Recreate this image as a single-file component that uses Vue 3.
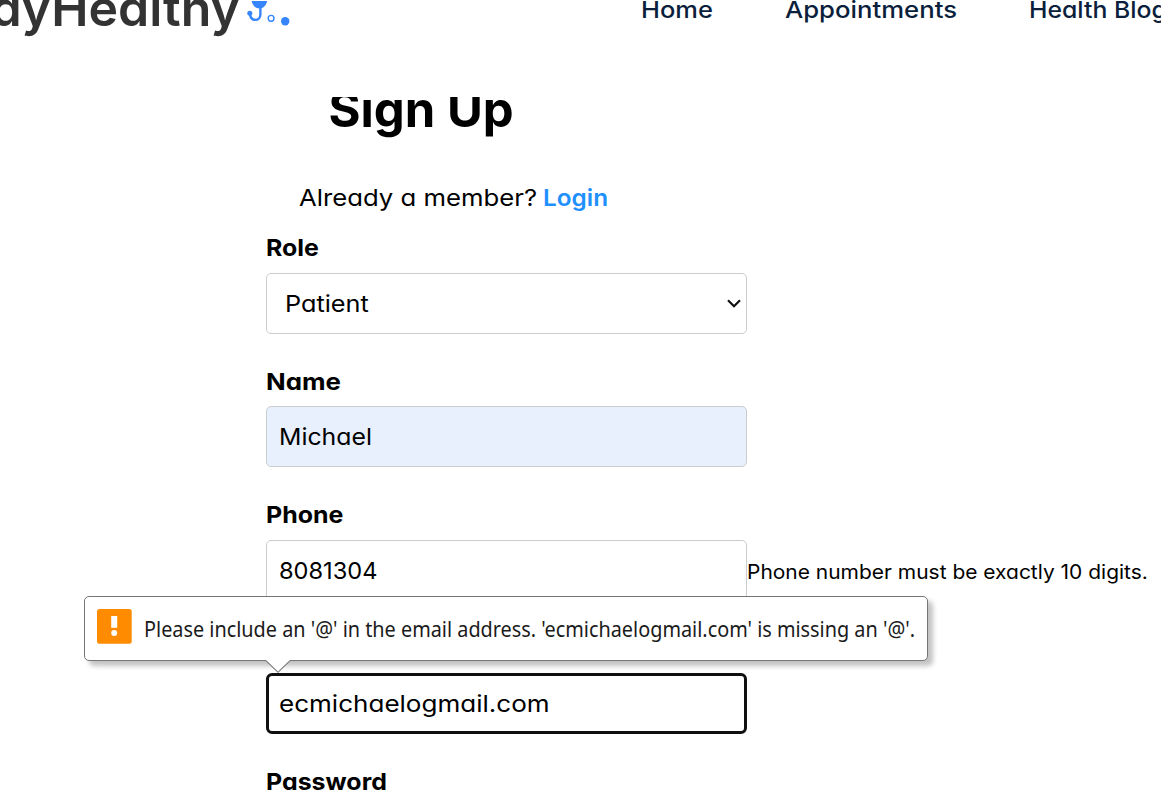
<script setup>
const nav = [
  { label: 'Home', key: 'home' },
  { label: 'Appointments', key: 'appointments' },
  { label: 'Health Blog', key: 'blog' }
]
</script>

<template>
  <div class="page">
    <header class="header">
      <div class="logo"><span class="logo-text">StayHealthy</span></div>
      <svg class="logo-icon" width="46" height="30" viewBox="246 0 46 30">
        <path d="M251.6 1H267.2C266.2 5 263.6 7.8 261.2 8.2H257.6C254.8 7.4 252.5 5 251.6 1Z" fill="#3685fb" />
        <path d="M260.4 7V14.2C260.4 17.8 258.2 19.9 255.3 19.9C252.2 19.9 250.2 17.6 250 13.6" fill="none" stroke="#3685fb" stroke-width="2.4" />
        <circle cx="249.8" cy="13.3" r="2.5" fill="#3685fb" />
        <circle cx="271.1" cy="18.3" r="2.9" fill="none" stroke="#3685fb" stroke-width="1.4" />
        <circle cx="285.2" cy="21.2" r="4.2" fill="#3685fb" />
      </svg>
      <nav class="nav">
        <a v-for="n in nav" :key="n.key" class="nav-item" :class="`${n.key}-item`"><span class="wide" :class="n.key">{{ n.label }}</span></a>
      </nav>
    </header>

    <main class="main">
      <h1 class="title"><span class="wide heading">Sign Up</span></h1>
      <p class="sub"><span class="already-cell"><span class="wide already">Already a member?</span></span><a class="wide login">Login</a></p>

      <div class="field">
        <label class="label first"><span class="wide role">Role</span></label>
        <div class="box select">
          <span class="wide patient">Patient</span>
          <svg width="16" height="12" viewBox="0 0 16 12"><path d="M2 2.2L8 8.2L14 2.2" fill="none" stroke="#111" stroke-width="2.2" /></svg>
        </div>
      </div>
      <div class="field">
        <label class="label"><span class="wide name">Name</span></label>
        <div class="box filled"><span class="wide michael">Michael</span></div>
      </div>
      <div class="field">
        <label class="label"><span class="wide phone">Phone</span></label>
        <div class="row">
          <div class="box"><span class="wide digits">8081304</span></div>
          <span class="wide note">Phone number must be exactly 10 digits.</span>
        </div>
      </div>
      <div class="field">
        <div class="label"></div>
        <div class="box focused"><span class="wide email">ecmichaelogmail.com</span></div>
      </div>
      <div class="field">
        <label class="label"><span class="wide password">Password</span></label>
      </div>
    </main>

    <div class="bubble">
      <svg class="warn" width="35" height="35" viewBox="0 0 35 35">
        <rect width="34.7" height="34.7" rx="2.5" fill="#ff8c00" />
        <rect x="14.2" y="7" width="6" height="11.8" fill="#fff" />
        <circle cx="17.2" cy="24" r="3" fill="#fff" />
      </svg>
      <span class="wide bubble-text">Please include an '@' in the email address. 'ecmichaelogmail.com' is missing an '@'.</span>
      <svg class="arrow" width="26" height="14" viewBox="0 0 26 14">
        <path d="M1 0H25V1L13 12.5L1 1Z" fill="#fff" />
        <path d="M1 .7L13 12.3L25 .7" fill="none" stroke="#767676" stroke-width="1.1" />
      </svg>
    </div>
  </div>
</template>

<style>
body { background: #fff; overflow: hidden; }
</style>

<style scoped>
.page {
  position: relative;
  width: 1161px;
  height: 790px;
  overflow: hidden;
  background: #fff;
  color: #000;
  font-family: Inter, "Open Sans", sans-serif;
  font-feature-settings: "cv11";
  font-size: 23.5px;
  white-space: nowrap;
}
.wide { display: inline-block; transform-origin: left center; }
.header {
  position: relative;
  z-index: 1;
  display: flex;
  align-items: flex-start;
  height: 97px;
  background: #fff;
}
.logo {
  display: flex;
  justify-content: flex-end;
  width: 240px;
  height: 60px;
  margin-right: 6px;
}
.logo-text {
  font-size: 50px;
  font-weight: 600;
  line-height: 60px;
  color: #333;
  margin-top: -22px;
}
.logo-icon { flex: none; }
.nav { display: flex; margin-left: 348.5px; color: #0b1f3c; font-weight: 500; }
.nav-item { flex: none; line-height: 36px; margin-top: -8px; }
.home-item { width: 144px; }
.appointments-item { width: 244px; }
.home { transform: scaleX(1.083); }
.appointments { transform: scaleX(1.094); }
.blog { transform: scaleX(1.055); }
.main { padding-left: 266px; }
.title {
  margin: -21px 0 0 62.5px;
  font-size: 49px;
  font-weight: 700;
  line-height: 68px;
}
.sub {
  display: flex;
  margin: 35.5px 0 0 32.5px;
  line-height: 36px;
}
.already-cell { width: 244px; }
.already { transform: scaleX(1.094); }
.login { color: #2190ff; font-weight: 600; transform: scaleX(1.035); }
.field { height: 133.4px; }
.sub + .field { margin-top: 14px; }
.label { display: block; height: 43.5px; line-height: 37px; font-weight: 700; }
.first { line-height: 36px; }
.role { transform: scaleX(1.06); }
.name { transform: scaleX(1.098); }
.phone { transform: scaleX(1.062); }
.password { transform: scaleX(1.06); }
.patient { transform: scaleX(1.075); }
.michael { transform: scaleX(1.056); }
.digits { transform: scaleX(1.005); margin-top: 1px; }
.email { transform: scaleX(1.108); }
.row { display: flex; align-items: center; }
.box {
  display: flex;
  align-items: center;
  flex: none;
  box-sizing: border-box;
  width: 481px;
  height: 61px;
  padding-left: 12px;
  border: 1px solid #ccc;
  border-radius: 5px;
  background: #fff;
}
.select { justify-content: space-between; padding: 0 4px 0 18px; }
.filled { background: #e8f0fe; }
.focused { border: 3px solid #101010; padding-left: 10px; border-radius: 6px; }
.note { font-size: 20px; margin-top: 3px; transform: scaleX(1.048); }
.bubble {
  position: absolute;
  left: 84px;
  top: 596px;
  z-index: 2;
  display: flex;
  align-items: center;
  box-sizing: border-box;
  width: 844px;
  height: 65px;
  padding-left: 12px;
  border: 1px solid #767676;
  border-radius: 5px;
  background: #fff;
  box-shadow: 5px 5px 5px rgba(0, 0, 0, 0.24);
}
.warn { flex: none; margin-top: -5px; }
.bubble-text {
  margin: 1px 0 0 12px;
  font-family: "Noto Sans", "Open Sans", sans-serif;
  font-size: 21px;
  transform: scaleX(0.945);
  color: #1b1b1b;
}
.arrow { position: absolute; left: 180px; top: 63px; }
</style>
